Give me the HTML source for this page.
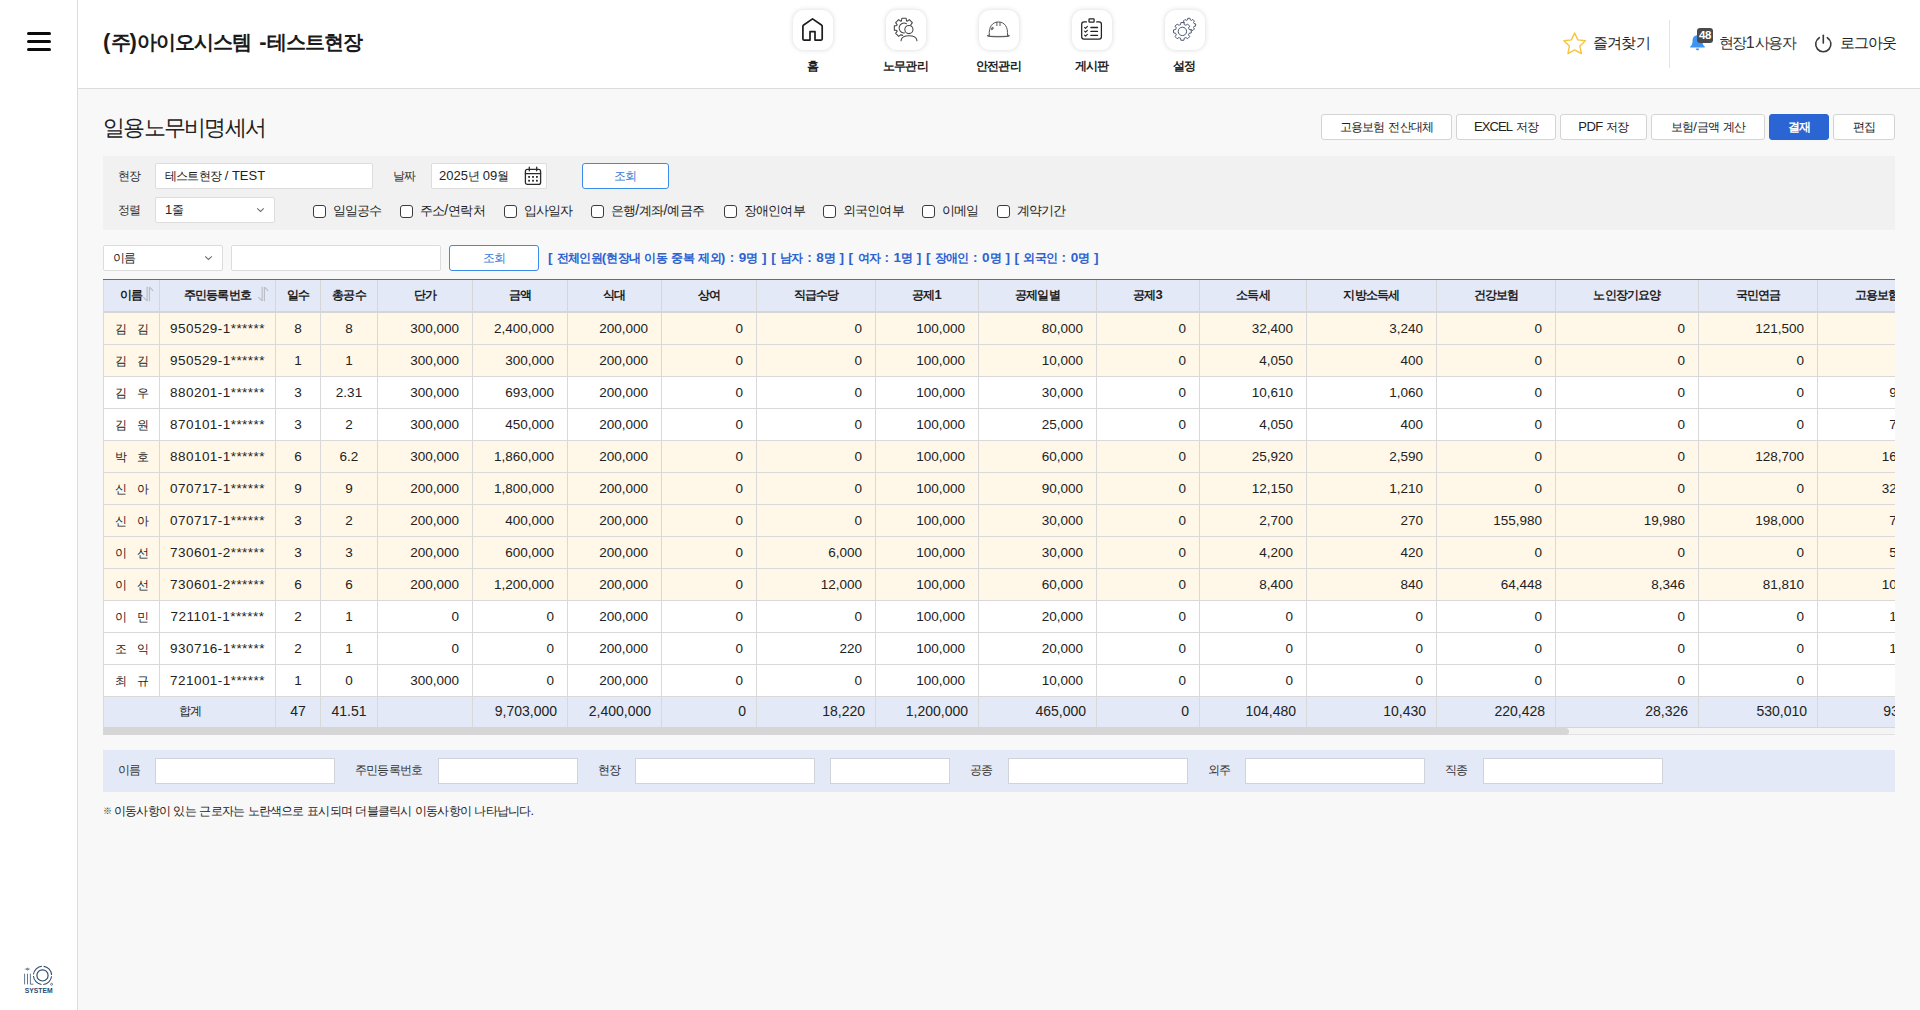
<!DOCTYPE html>
<html lang="ko">
<head>
<meta charset="utf-8">
<title>일용노무비명세서</title>
<style>
*{box-sizing:border-box;margin:0;padding:0}
html,body{width:1920px;height:1010px;overflow:hidden;background:#f8f8f8;font-family:"Liberation Sans",sans-serif;color:#222}
.k{font-size:.925em;letter-spacing:-.065em}
#pt .k{letter-spacing:-1.750px}
#ttl .k{letter-spacing:-1px}
#usr .k{letter-spacing:-1.600px}
#note .k{letter-spacing:-.8px}
.abs{position:absolute;white-space:nowrap}
#side{position:absolute;left:0;top:0;width:78px;height:1010px;background:#fff;border-right:1px solid #dcdcdc}
#head{position:absolute;left:78px;top:0;width:1842px;height:89px;background:#fff;border-bottom:1px solid #dcdcdc}
.bar{position:absolute;left:27px;width:24px;height:3px;background:#0a0a0a;border-radius:1.500px}
.t{position:absolute;white-space:nowrap;line-height:1}
.navbox{position:absolute;top:10px;width:40px;height:40px;border-radius:11px;background:#fff;box-shadow:0 0 5px rgba(0,0,0,.16)}
.navlbl{position:absolute;top:58px;width:120px;text-align:center;font-weight:700;font-size:13px;line-height:15px;color:#222}
.btn{position:absolute;top:114px;height:26px;border:1px solid #d4d4d4;border-radius:3px;background:#fff;font-size:13px;line-height:24px;text-align:center;color:#222;white-space:nowrap;overflow:hidden}
.inp{position:absolute;background:#fff;border:1px solid #dcdcdc;border-radius:2px;font-size:13px;color:#222;white-space:nowrap;overflow:hidden}
.lbl{position:absolute;font-size:13px;line-height:16px;color:#333;white-space:nowrap}
.cb{position:absolute;top:205px;width:13px;height:13px;border:1px solid #3c3c3c;border-radius:3px;background:#fff}
.cbl{position:absolute;top:202px;font-size:14px;line-height:17px;color:#222;white-space:nowrap;font-weight:500}
.fi{top:758px;height:26px;border-color:#d0d3da;border-radius:0}
.qbtn{position:absolute;height:26px;border:1px solid #3b8be8;border-radius:3px;background:#fff;color:#3577d8;font-size:13px;line-height:24px;text-align:center}


#tw{position:absolute;left:103px;top:279px;width:1792px;height:449px;overflow:hidden;border-top:1px solid #3f6fd4}
.row{display:flex;width:1834px;height:32px;overflow:hidden;border-left:1px solid #d9d9d9;border-bottom:1px solid #d9d9d9}
.row>div{flex:none;height:31px;line-height:31px;overflow:hidden;white-space:nowrap;border-right:1px solid #d9d9d9;font-size:13.500px;color:#222;background:#fff;text-align:right;padding-right:13px}
.row>div.c{text-align:center;padding-right:0}
.row.h{height:33px;border-bottom:2px solid #d5d5d5}
.row.h>div{height:31px;line-height:30px;background:#e3e9f6;font-weight:700;font-size:13px;text-align:center;color:#1f1f1f;padding-right:0;border-right-color:#d6d6d6}
.row.y>div{background:#fff8e9}
.row.tot{height:31px;border-bottom:1px solid #d6d6d6}
.row.tot>div{height:30px;line-height:28px;background:#e3e9f6;font-size:14px;padding-right:10px}
.row.tot>div.c{padding-right:0}
.sort{display:inline-block;vertical-align:-4px}
</style>
</head>
<body>
<!-- sidebar -->
<div id="side">
  <div class="bar" style="top:32px"></div>
  <div class="bar" style="top:40px"></div>
  <div class="bar" style="top:48px"></div>
  <svg class="abs" style="left:23px;top:965px" width="32" height="29" viewBox="0 0 32 29">
    <g fill="none" stroke="#2f4a6b">
      <path d="M1.600 8.700V19.400M4.500 8.700V19.400M7.400 8.700V19.200H10.400" stroke-width=".75"/>
      <circle cx="4.500" cy="4.100" r=".9" stroke-width=".7"/><path d="M1.700 4.100H7.200" stroke-width=".45"/>
      <circle cx="19.500" cy="10.400" r="9.100" stroke-width="1.050" stroke-dasharray="12.500 1.800" stroke-dashoffset="-.9"/>
      <circle cx="19.500" cy="10.400" r="5.600" stroke-width="1.150"/>
      <circle cx="28.600" cy="19.300" r="1" stroke-width=".7"/>
    </g>
    <text x="1.800" y="27.700" font-family="Liberation Sans, sans-serif" font-weight="700" font-size="6.300" fill="#2f4a6b" textLength="27.800" lengthAdjust="spacingAndGlyphs">SYSTEM</text>
  </svg>
</div>

<!-- header -->
<div id="head"></div>
<div class="t" style="left:103px;top:31.400px;font-size:22px;font-weight:700;color:#1b1b1b;word-spacing:2px;letter-spacing:.2px" id="ttl">(&#8203;<span class="k">주</span>)&#8203;<span class="k">아이오시스템</span> -&#8203;<span class="k">테스트현장</span></div>

<!-- NAV -->
<div class="navbox" style="left:793px"></div>
<div class="navbox" style="left:886px"></div>
<div class="navbox" style="left:979px"></div>
<div class="navbox" style="left:1072px"></div>
<div class="navbox" style="left:1165px"></div>
<!-- home icon -->
<svg class="abs" style="left:801px;top:16px" width="24" height="26" viewBox="0 0 24 26"><path d="M1.900 10.500Q1.900 9.600 2.650 9.050L11.550 2.850L20.450 9.050Q21.200 9.600 21.200 10.500V23.100a.95.95 0 0 1-.95.95H14V15.550H9V24.050H2.850a.95.95 0 0 1-.95-.95Z" fill="none" stroke="#1c1c1c" stroke-width="1.700" stroke-linejoin="round"/></svg>
<!-- labor icon -->
<svg class="abs" style="left:892px;top:16px" width="28" height="27" viewBox="0 0 28 27"><g fill="none" stroke="#454545" stroke-width="1.05" stroke-linejoin="round" stroke-linecap="round"><path d="M10.70 19.39A7.5 7.5 0 0 1 8.83 18.80L6.68 20.35L3.65 17.32L5.20 15.17A7.5 7.5 0 0 1 4.95 14.57L2.33 14.14L2.33 9.86L4.95 9.43A7.5 7.5 0 0 1 5.20 8.83L3.65 6.68L6.68 3.65L8.83 5.20A7.5 7.5 0 0 1 9.43 4.95L9.86 2.33L14.14 2.33L14.57 4.95A7.5 7.5 0 0 1 15.17 5.20L17.32 3.65L20.35 6.68L18.80 8.83A7.5 7.5 0 0 1 18.95 9.19"/><path d="M14.45 7.76A4.9 4.9 0 1 0 12.3 16.89"/><circle cx="16.900" cy="13.500" r="4.100" fill="#fff"/><path d="M9.100 24.800v-.7c.5-2.700 3.800-4.300 7.900-4.300s7.400 1.600 7.900 4.300v.7"/></g></svg>
<!-- helmet icon -->
<svg class="abs" style="left:985px;top:18px" width="27" height="22" viewBox="0 0 27 22"><g fill="none" stroke="#4d4d4d" stroke-width=".95" stroke-linejoin="round" stroke-linecap="round"><path d="M4.300 17.100C3.600 8.600 7.400 4 13.400 4S23.200 8.600 22.500 17.100"/><path d="M4.300 17.100c-.9.100-1.700.3-1.900.6.300 1.500 21.700 1.500 22 0-.2-.3-1-.5-1.900-.6"/><path d="M2.600 17.900c3.300.7 18.300.7 21.600 0" stroke-width=".7"/><path d="M11.900 4.300V7.600M15 4.300V7.600"/><ellipse cx="7.200" cy="10.500" rx=".7" ry="1.500" transform="rotate(28 7.200 10.500)" stroke-width=".8"/></g></svg>
<!-- board icon -->
<svg class="abs" style="left:1080px;top:17px" width="24" height="24" viewBox="0 0 24 24"><g fill="none" stroke="#222" stroke-width="1.250" stroke-linejoin="round" stroke-linecap="round"><path d="M6.400 4.950H4a2.300 2.300 0 0 0-2.300 2.300V19.700A2.300 2.300 0 0 0 4 22H19.100a2.300 2.300 0 0 0 2.300-2.300V7.250a2.300 2.300 0 0 0-2.300-2.300H16.700"/><rect x="9" y="1.900" width="5.100" height="3.300" rx=".6"/><path d="M10.900 10.500h6.600M10.900 14.400h6.600M10.900 18.400h6.600" stroke-width="1.350"/><path d="M4.600 10.300l1 1 1.800-1.900M4.600 14.200l1 1 1.800-1.900M4.600 18.200l1 1 1.800-1.900" stroke-width="1.100"/></g></svg>
<!-- settings icon -->
<svg class="abs" style="left:1168px;top:14px" width="32" height="30" viewBox="0 0 32 30"><g fill="#fff" stroke="#4b5872" stroke-width="1" stroke-linejoin="round"><path d="M26.01 9.58L27.61 9.88L27.61 12.12L26.01 12.42A5.3 5.3 0 0 1 25.51 13.61L26.44 14.95L24.85 16.54L23.51 15.61A5.3 5.3 0 0 1 22.32 16.11L22.02 17.71L19.78 17.71L19.48 16.11A5.3 5.3 0 0 1 18.29 15.61L16.95 16.54L15.36 14.95L16.29 13.61A5.3 5.3 0 0 1 15.79 12.42L14.19 12.12L14.19 9.88L15.79 9.58A5.3 5.3 0 0 1 16.29 8.39L15.36 7.05L16.95 5.46L18.29 6.39A5.3 5.3 0 0 1 19.48 5.89L19.78 4.29L22.02 4.29L22.32 5.89A5.3 5.3 0 0 1 23.51 6.39L24.85 5.46L26.44 7.05L25.51 8.39A5.3 5.3 0 0 1 26.01 9.58Z"/><path d="M21.15 15.53L23.28 15.91L23.28 18.89L21.15 19.27A7.0 7.0 0 0 1 20.49 20.85L21.73 22.63L19.63 24.73L17.85 23.49A7.0 7.0 0 0 1 16.27 24.15L15.89 26.28L12.91 26.28L12.53 24.15A7.0 7.0 0 0 1 10.95 23.49L9.17 24.73L7.07 22.63L8.31 20.85A7.0 7.0 0 0 1 7.65 19.27L5.52 18.89L5.52 15.91L7.65 15.53A7.0 7.0 0 0 1 8.31 13.95L7.07 12.17L9.17 10.07L10.95 11.31A7.0 7.0 0 0 1 12.53 10.65L12.91 8.52L15.89 8.52L16.27 10.65A7.0 7.0 0 0 1 17.85 11.31L19.63 10.07L21.73 12.17L20.49 13.95A7.0 7.0 0 0 1 21.15 15.53Z"/><circle cx="14.400" cy="17.400" r="4.200"/></g></svg>
<div class="navlbl" style="left:752.4px">&#8203;<span class="k">홈</span></div>
<div class="navlbl" style="left:845.4px">&#8203;<span class="k">노무관리</span></div>
<div class="navlbl" style="left:938.4px">&#8203;<span class="k">안전관리</span></div>
<div class="navlbl" style="left:1031.4px">&#8203;<span class="k">게시판</span></div>
<div class="navlbl" style="left:1124.4px">&#8203;<span class="k">설정</span></div>
<!-- RIGHT -->
<svg class="abs" style="left:1561.400px;top:30.400px" width="27.300" height="27.300" viewBox="0 0 26 26"><path d="M13 2.800l3.100 6.600 7.200.9-5.300 5 1.400 7.100L13 18.900l-6.400 3.500L8 15.300l-5.300-5 7.200-.9z" fill="none" stroke="#f8c43e" stroke-width="1.350" stroke-linejoin="round"/></svg>
<div class="t" style="left:1593.400px;top:35px;font-size:16px;color:#222">&#8203;<span class="k">즐겨찾기</span></div>
<div class="abs" style="left:1669px;top:20px;width:1px;height:48px;background:#e4e4e4"></div>
<svg class="abs" style="left:1689px;top:34px" width="17" height="18" viewBox="0 0 17 18"><path d="M8.500 1.200c-3 0-4.900 2.200-4.900 5.200 0 3.400-1 4.900-2.300 6.200-.4.400-.1 1 .4 1h13.600c.5 0 .8-.6.4-1-1.300-1.300-2.300-2.800-2.300-6.200 0-3-1.900-5.200-4.900-5.200zM6.700 14.600a1.800 1.800 0 0 0 3.600 0z" fill="#3d94f2"/></svg>
<div class="abs" style="left:1697px;top:28px;width:16px;height:15px;border-radius:3px;background:#4a4a4a;color:#fff;font-size:11.500px;line-height:15px;text-align:center;font-weight:700;letter-spacing:-0.3px">48</div>
<div class="t" style="left:1719px;top:35px;font-size:16px;color:#333" id="usr">&#8203;<span class="k">현장</span>1&#8203;<span class="k">사용자</span></div>
<svg class="abs" style="left:1813px;top:33px" width="20" height="20" viewBox="0 0 20 20"><g fill="none" stroke="#3a3a3a" stroke-width="1.600" stroke-linecap="round"><path d="M6.300 4.700a7.600 7.600 0 1 0 8 0"/><path d="M10.300 2.300v7.800"/></g></svg>
<div class="t" style="left:1840px;top:35px;font-size:16px;color:#222">&#8203;<span class="k">로그아웃</span></div>
<!-- TITLE -->
<div class="t" style="left:103px;top:115px;font-size:24px;color:#222" id="pt">&#8203;<span class="k">일용노무비명세서</span></div>
<div class="btn" style="left:1321px;width:131px">&#8203;<span class="k">고용보험</span> &#8203;<span class="k">전산대체</span></div>
<div class="btn" style="left:1456px;width:100px"><span style="letter-spacing:-.9px">EXCEL</span> &#8203;<span class="k">저장</span></div>
<div class="btn" style="left:1560px;width:87px"><span style="letter-spacing:-.6px">PDF</span> &#8203;<span class="k">저장</span></div>
<div class="btn" style="left:1651px;width:114px">&#8203;<span class="k">보험</span>/&#8203;<span class="k">금액</span> &#8203;<span class="k">계산</span></div>
<div class="btn" style="left:1769px;width:60px;background:#2a65d3;border-color:#2a65d3;color:#fff;font-weight:700">&#8203;<span class="k">결재</span></div>
<div class="btn" style="left:1833px;width:62px">&#8203;<span class="k">편집</span></div>
<!-- FILTER -->
<div class="abs" style="left:103px;top:156px;width:1792px;height:74px;background:#f1f1f1"></div>
<div class="lbl" style="left:118px;top:168px">&#8203;<span class="k">현장</span></div>
<div class="inp" style="left:155px;top:163px;width:218px;height:26px;line-height:24px;padding-left:9px">&#8203;<span class="k">테스트현장</span> / TEST</div>
<div class="lbl" style="left:393px;top:168px">&#8203;<span class="k">날짜</span></div>
<div class="inp" style="left:431px;top:163px;width:116px;height:26px;line-height:24px;padding-left:7px">2025&#8203;<span class="k">년</span> 09&#8203;<span class="k">월</span></div>
<svg class="abs" style="left:524px;top:166px" width="18" height="20" viewBox="0 0 18 20"><g fill="none" stroke="#2a2a2a" stroke-width="1.300"><rect x="1.400" y="3.400" width="15.200" height="15" rx="2"/><path d="M1.400 7.600h15.200M5.300 1.200v3.600M12.700 1.200v3.600" stroke-linecap="round"/></g><g fill="#2a2a2a"><rect x="4.200" y="10" width="1.800" height="1.800"/><rect x="8.100" y="10" width="1.800" height="1.800"/><rect x="12" y="10" width="1.800" height="1.800"/><rect x="4.200" y="13.800" width="1.800" height="1.800"/><rect x="8.100" y="13.800" width="1.800" height="1.800"/><rect x="12" y="13.800" width="1.800" height="1.800"/></g></svg>
<div class="qbtn" style="left:582px;top:163px;width:87px">&#8203;<span class="k">조회</span></div>
<div class="lbl" style="left:118px;top:202px">&#8203;<span class="k">정렬</span></div>
<div class="inp" style="left:155px;top:197px;width:120px;height:26px;line-height:24px;padding-left:9px">1&#8203;<span class="k">줄</span></div>
<svg class="abs" style="left:256px;top:207px" width="9" height="6" viewBox="0 0 9 6"><path d="M1.200 1.300l3.300 3.200 3.300-3.200" fill="none" stroke="#6e6e6e" stroke-width="1.050"/></svg>
<div class="cb" style="left:313px"></div><div class="cbl" style="left:333px">&#8203;<span class="k">일일공수</span></div>
<div class="cb" style="left:400px"></div><div class="cbl" style="left:420px">&#8203;<span class="k">주소</span>/&#8203;<span class="k">연락처</span></div>
<div class="cb" style="left:504px"></div><div class="cbl" style="left:524px">&#8203;<span class="k">입사일자</span></div>
<div class="cb" style="left:591px"></div><div class="cbl" style="left:611px">&#8203;<span class="k">은행</span>/&#8203;<span class="k">계좌</span>/&#8203;<span class="k">예금주</span></div>
<div class="cb" style="left:724px"></div><div class="cbl" style="left:744px">&#8203;<span class="k">장애인여부</span></div>
<div class="cb" style="left:823px"></div><div class="cbl" style="left:843px">&#8203;<span class="k">외국인여부</span></div>
<div class="cb" style="left:922px"></div><div class="cbl" style="left:942px">&#8203;<span class="k">이메일</span></div>
<div class="cb" style="left:997px"></div><div class="cbl" style="left:1017px">&#8203;<span class="k">계약기간</span></div>
<!-- SEARCH -->
<div class="inp" style="left:103px;top:245px;width:120px;height:26px;line-height:24px;padding-left:9px">&#8203;<span class="k">이름</span></div>
<svg class="abs" style="left:204px;top:255px" width="9" height="6" viewBox="0 0 9 6"><path d="M1.200 1.300l3.300 3.200 3.300-3.200" fill="none" stroke="#6e6e6e" stroke-width="1.050"/></svg>
<div class="inp" style="left:231px;top:245px;width:210px;height:26px"></div>
<div class="qbtn" style="left:449px;top:245px;width:90px">&#8203;<span class="k">조회</span></div>
<div class="t" style="left:548px;top:251px;font-size:13.500px;font-weight:700;color:#2e62cf;word-spacing:.8px">[ &#8203;<span class="k">전체인원</span>(&#8203;<span class="k">현장내</span> &#8203;<span class="k">이동</span> &#8203;<span class="k">중복</span> &#8203;<span class="k">제외</span>) : 9&#8203;<span class="k">명</span> ] [ &#8203;<span class="k">남자</span> : 8&#8203;<span class="k">명</span> ] [ &#8203;<span class="k">여자</span> : 1&#8203;<span class="k">명</span> ] [ &#8203;<span class="k">장애인</span> : 0&#8203;<span class="k">명</span> ] [ &#8203;<span class="k">외국인</span> : 0&#8203;<span class="k">명</span> ]</div>
<!-- TABLE -->
<div id="tw">
<div class="row h"><div style="width:56px"><span style="padding-left:11px">&#8203;<span class="k">이름</span></span><svg class="sort" width="12.500" height="18" viewBox="0 0 11 16"><g fill="none" stroke="#b9bcc4" stroke-width="1"><path d="M4.500 1.500v12.700M4.500 14.200l-3.400-3.400"/><path d="M6.500 14.500V1.800M6.500 1.800l3.400 3.400"/></g></svg></div><div style="width:116px"><span style="padding-left:18px">&#8203;<span class="k">주민등록번호</span></span> <span style="margin-left:2px"><svg class="sort" width="12.500" height="18" viewBox="0 0 11 16"><g fill="none" stroke="#b9bcc4" stroke-width="1"><path d="M4.500 1.500v12.700M4.500 14.200l-3.400-3.400"/><path d="M6.500 14.500V1.800M6.500 1.800l3.400 3.400"/></g></svg></span></div><div style="width:45px">&#8203;<span class="k">일수</span></div><div style="width:57px">&#8203;<span class="k">총공수</span></div><div style="width:95px">&#8203;<span class="k">단가</span></div><div style="width:95px">&#8203;<span class="k">금액</span></div><div style="width:94px">&#8203;<span class="k">식대</span></div><div style="width:95px">&#8203;<span class="k">상여</span></div><div style="width:119px">&#8203;<span class="k">직급수당</span></div><div style="width:103px">&#8203;<span class="k">공제</span>1</div><div style="width:118px">&#8203;<span class="k">공제일별</span></div><div style="width:103px">&#8203;<span class="k">공제</span>3</div><div style="width:107px">&#8203;<span class="k">소득세</span></div><div style="width:130px">&#8203;<span class="k">지방소득세</span></div><div style="width:119px">&#8203;<span class="k">건강보험</span></div><div style="width:143px">&#8203;<span class="k">노인장기요양</span></div><div style="width:119px">&#8203;<span class="k">국민연금</span></div><div style="width:119px">&#8203;<span class="k">고용보험</span></div></div>
<div class="row y"><div class="c" style="width:56px">&#8203;<span class="k">김</span>&nbsp;&nbsp;&nbsp;&#8203;<span class="k">김</span></div><div class="c" style="width:116px;letter-spacing:.45px">950529-1******</div><div class="c" style="width:45px">8</div><div class="c" style="width:57px">8</div><div style="width:95px">300,000</div><div style="width:95px">2,400,000</div><div style="width:94px">200,000</div><div style="width:95px">0</div><div style="width:119px">0</div><div style="width:103px">100,000</div><div style="width:118px">80,000</div><div style="width:103px">0</div><div style="width:107px">32,400</div><div style="width:130px">3,240</div><div style="width:119px">0</div><div style="width:143px">0</div><div style="width:119px">121,500</div><div style="width:119px">0</div></div>
<div class="row y"><div class="c" style="width:56px">&#8203;<span class="k">김</span>&nbsp;&nbsp;&nbsp;&#8203;<span class="k">김</span></div><div class="c" style="width:116px;letter-spacing:.45px">950529-1******</div><div class="c" style="width:45px">1</div><div class="c" style="width:57px">1</div><div style="width:95px">300,000</div><div style="width:95px">300,000</div><div style="width:94px">200,000</div><div style="width:95px">0</div><div style="width:119px">0</div><div style="width:103px">100,000</div><div style="width:118px">10,000</div><div style="width:103px">0</div><div style="width:107px">4,050</div><div style="width:130px">400</div><div style="width:119px">0</div><div style="width:143px">0</div><div style="width:119px">0</div><div style="width:119px">0</div></div>
<div class="row"><div class="c" style="width:56px">&#8203;<span class="k">김</span>&nbsp;&nbsp;&nbsp;&#8203;<span class="k">우</span></div><div class="c" style="width:116px;letter-spacing:.45px">880201-1******</div><div class="c" style="width:45px">3</div><div class="c" style="width:57px">2.31</div><div style="width:95px">300,000</div><div style="width:95px">693,000</div><div style="width:94px">200,000</div><div style="width:95px">0</div><div style="width:119px">0</div><div style="width:103px">100,000</div><div style="width:118px">30,000</div><div style="width:103px">0</div><div style="width:107px">10,610</div><div style="width:130px">1,060</div><div style="width:119px">0</div><div style="width:143px">0</div><div style="width:119px">0</div><div style="width:119px">9,009</div></div>
<div class="row"><div class="c" style="width:56px">&#8203;<span class="k">김</span>&nbsp;&nbsp;&nbsp;&#8203;<span class="k">원</span></div><div class="c" style="width:116px;letter-spacing:.45px">870101-1******</div><div class="c" style="width:45px">3</div><div class="c" style="width:57px">2</div><div style="width:95px">300,000</div><div style="width:95px">450,000</div><div style="width:94px">200,000</div><div style="width:95px">0</div><div style="width:119px">0</div><div style="width:103px">100,000</div><div style="width:118px">25,000</div><div style="width:103px">0</div><div style="width:107px">4,050</div><div style="width:130px">400</div><div style="width:119px">0</div><div style="width:143px">0</div><div style="width:119px">0</div><div style="width:119px">7,200</div></div>
<div class="row y"><div class="c" style="width:56px">&#8203;<span class="k">박</span>&nbsp;&nbsp;&nbsp;&#8203;<span class="k">호</span></div><div class="c" style="width:116px;letter-spacing:.45px">880101-1******</div><div class="c" style="width:45px">6</div><div class="c" style="width:57px">6.2</div><div style="width:95px">300,000</div><div style="width:95px">1,860,000</div><div style="width:94px">200,000</div><div style="width:95px">0</div><div style="width:119px">0</div><div style="width:103px">100,000</div><div style="width:118px">60,000</div><div style="width:103px">0</div><div style="width:107px">25,920</div><div style="width:130px">2,590</div><div style="width:119px">0</div><div style="width:143px">0</div><div style="width:119px">128,700</div><div style="width:119px">16,740</div></div>
<div class="row y"><div class="c" style="width:56px">&#8203;<span class="k">신</span>&nbsp;&nbsp;&nbsp;&#8203;<span class="k">아</span></div><div class="c" style="width:116px;letter-spacing:.45px">070717-1******</div><div class="c" style="width:45px">9</div><div class="c" style="width:57px">9</div><div style="width:95px">200,000</div><div style="width:95px">1,800,000</div><div style="width:94px">200,000</div><div style="width:95px">0</div><div style="width:119px">0</div><div style="width:103px">100,000</div><div style="width:118px">90,000</div><div style="width:103px">0</div><div style="width:107px">12,150</div><div style="width:130px">1,210</div><div style="width:119px">0</div><div style="width:143px">0</div><div style="width:119px">0</div><div style="width:119px">32,400</div></div>
<div class="row y"><div class="c" style="width:56px">&#8203;<span class="k">신</span>&nbsp;&nbsp;&nbsp;&#8203;<span class="k">아</span></div><div class="c" style="width:116px;letter-spacing:.45px">070717-1******</div><div class="c" style="width:45px">3</div><div class="c" style="width:57px">2</div><div style="width:95px">200,000</div><div style="width:95px">400,000</div><div style="width:94px">200,000</div><div style="width:95px">0</div><div style="width:119px">0</div><div style="width:103px">100,000</div><div style="width:118px">30,000</div><div style="width:103px">0</div><div style="width:107px">2,700</div><div style="width:130px">270</div><div style="width:119px">155,980</div><div style="width:143px">19,980</div><div style="width:119px">198,000</div><div style="width:119px">7,200</div></div>
<div class="row y"><div class="c" style="width:56px">&#8203;<span class="k">이</span>&nbsp;&nbsp;&nbsp;&#8203;<span class="k">선</span></div><div class="c" style="width:116px;letter-spacing:.45px">730601-2******</div><div class="c" style="width:45px">3</div><div class="c" style="width:57px">3</div><div style="width:95px">200,000</div><div style="width:95px">600,000</div><div style="width:94px">200,000</div><div style="width:95px">0</div><div style="width:119px">6,000</div><div style="width:103px">100,000</div><div style="width:118px">30,000</div><div style="width:103px">0</div><div style="width:107px">4,200</div><div style="width:130px">420</div><div style="width:119px">0</div><div style="width:143px">0</div><div style="width:119px">0</div><div style="width:119px">5,400</div></div>
<div class="row y"><div class="c" style="width:56px">&#8203;<span class="k">이</span>&nbsp;&nbsp;&nbsp;&#8203;<span class="k">선</span></div><div class="c" style="width:116px;letter-spacing:.45px">730601-2******</div><div class="c" style="width:45px">6</div><div class="c" style="width:57px">6</div><div style="width:95px">200,000</div><div style="width:95px">1,200,000</div><div style="width:94px">200,000</div><div style="width:95px">0</div><div style="width:119px">12,000</div><div style="width:103px">100,000</div><div style="width:118px">60,000</div><div style="width:103px">0</div><div style="width:107px">8,400</div><div style="width:130px">840</div><div style="width:119px">64,448</div><div style="width:143px">8,346</div><div style="width:119px">81,810</div><div style="width:119px">10,800</div></div>
<div class="row"><div class="c" style="width:56px">&#8203;<span class="k">이</span>&nbsp;&nbsp;&nbsp;&#8203;<span class="k">민</span></div><div class="c" style="width:116px;letter-spacing:.45px">721101-1******</div><div class="c" style="width:45px">2</div><div class="c" style="width:57px">1</div><div style="width:95px">0</div><div style="width:95px">0</div><div style="width:94px">200,000</div><div style="width:95px">0</div><div style="width:119px">0</div><div style="width:103px">100,000</div><div style="width:118px">20,000</div><div style="width:103px">0</div><div style="width:107px">0</div><div style="width:130px">0</div><div style="width:119px">0</div><div style="width:143px">0</div><div style="width:119px">0</div><div style="width:119px">1,800</div></div>
<div class="row"><div class="c" style="width:56px">&#8203;<span class="k">조</span>&nbsp;&nbsp;&nbsp;&#8203;<span class="k">익</span></div><div class="c" style="width:116px;letter-spacing:.45px">930716-1******</div><div class="c" style="width:45px">2</div><div class="c" style="width:57px">1</div><div style="width:95px">0</div><div style="width:95px">0</div><div style="width:94px">200,000</div><div style="width:95px">0</div><div style="width:119px">220</div><div style="width:103px">100,000</div><div style="width:118px">20,000</div><div style="width:103px">0</div><div style="width:107px">0</div><div style="width:130px">0</div><div style="width:119px">0</div><div style="width:143px">0</div><div style="width:119px">0</div><div style="width:119px">1,800</div></div>
<div class="row"><div class="c" style="width:56px">&#8203;<span class="k">최</span>&nbsp;&nbsp;&nbsp;&#8203;<span class="k">규</span></div><div class="c" style="width:116px;letter-spacing:.45px">721001-1******</div><div class="c" style="width:45px">1</div><div class="c" style="width:57px">0</div><div style="width:95px">300,000</div><div style="width:95px">0</div><div style="width:94px">200,000</div><div style="width:95px">0</div><div style="width:119px">0</div><div style="width:103px">100,000</div><div style="width:118px">10,000</div><div style="width:103px">0</div><div style="width:107px">0</div><div style="width:130px">0</div><div style="width:119px">0</div><div style="width:143px">0</div><div style="width:119px">0</div><div style="width:119px">0</div></div>
<div class="row tot"><div class="c" style="width:172px;font-size:13px;padding-left:1px">&#8203;<span class="k">합계</span></div><div class="c" style="width:45px">47</div><div class="c" style="width:57px">41.51</div><div style="width:95px"></div><div style="width:95px">9,703,000</div><div style="width:94px">2,400,000</div><div style="width:95px">0</div><div style="width:119px">18,220</div><div style="width:103px">1,200,000</div><div style="width:118px">465,000</div><div style="width:103px">0</div><div style="width:107px">104,480</div><div style="width:130px">10,430</div><div style="width:119px">220,428</div><div style="width:143px">28,326</div><div style="width:119px">530,010</div><div style="width:119px">93,150</div></div>
</div>
<div class="abs" style="left:103px;top:728px;width:1792px;height:7px;background:#f4f4f4;border-bottom:1px solid #e2e2e2"></div>
<div class="abs" style="left:103px;top:728px;width:1466px;height:7px;background:#d6d6d6;border-radius:0 4px 4px 0"></div>
<!-- FORM -->
<div class="abs" style="left:103px;top:750px;width:1792px;height:42px;background:#e3e9f6"></div>
<div class="lbl" style="left:118px;top:762px">&#8203;<span class="k">이름</span></div>
<div class="inp fi" style="left:155px;width:180px"></div>
<div class="lbl" style="left:355px;top:762px">&#8203;<span class="k">주민등록번호</span></div>
<div class="inp fi" style="left:438px;width:140px"></div>
<div class="lbl" style="left:598px;top:762px">&#8203;<span class="k">현장</span></div>
<div class="inp fi" style="left:635px;width:180px"></div>
<div class="inp fi" style="left:830px;width:120px"></div>
<div class="lbl" style="left:970px;top:762px">&#8203;<span class="k">공종</span></div>
<div class="inp fi" style="left:1008px;width:180px"></div>
<div class="lbl" style="left:1208px;top:762px">&#8203;<span class="k">외주</span></div>
<div class="inp fi" style="left:1245px;width:180px"></div>
<div class="lbl" style="left:1445px;top:762px">&#8203;<span class="k">직종</span></div>
<div class="inp fi" style="left:1483px;width:180px"></div>
<div class="t" style="left:103px;top:805px;font-size:12.500px;color:#222" id="note"><span style="font-size:9px;position:relative;top:-1px;margin-right:-1.500px">※</span> &#8203;<span class="k">이동사항이</span> &#8203;<span class="k">있는</span> &#8203;<span class="k">근로자는</span> &#8203;<span class="k">노란색으로</span> &#8203;<span class="k">표시되며</span> &#8203;<span class="k">더블클릭시</span> &#8203;<span class="k">이동사항이</span> &#8203;<span class="k">나타납니다</span>.</div>
</body>
</html>
